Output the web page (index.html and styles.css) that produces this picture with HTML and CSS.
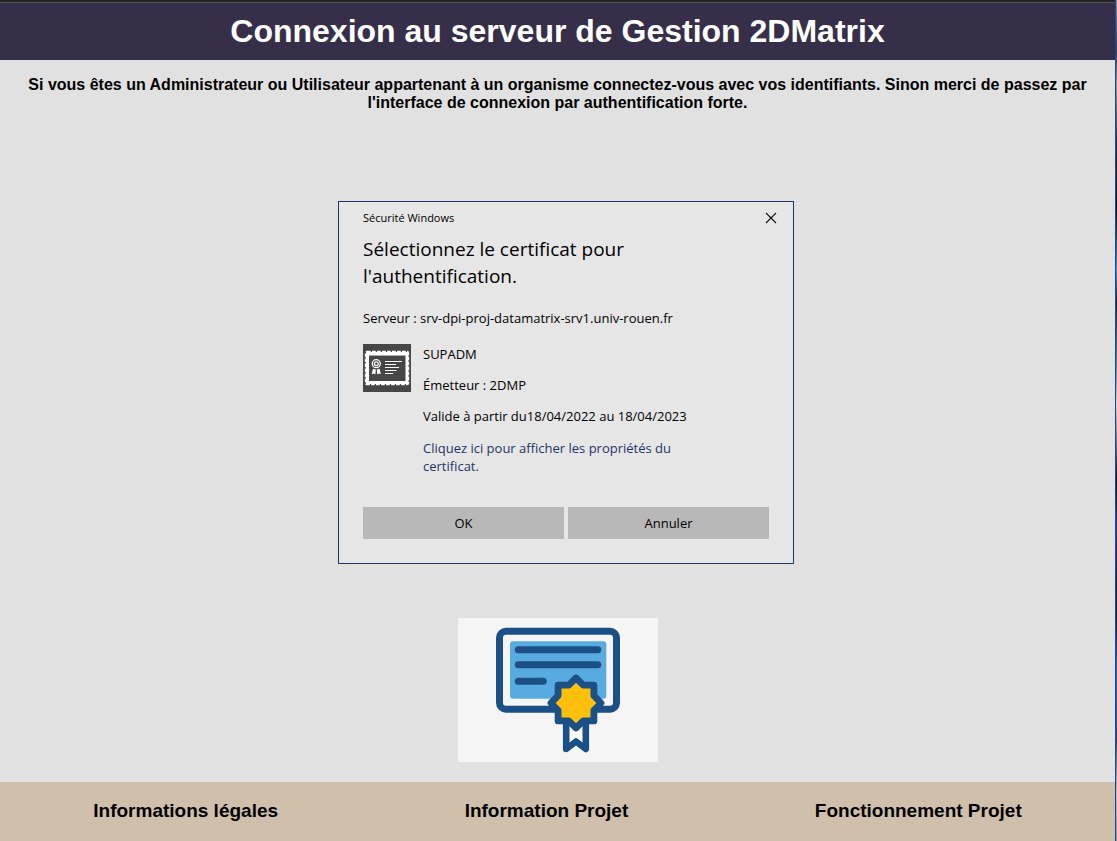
FILE: index.html
```html
<!DOCTYPE html>
<html lang="fr">
<head>
<meta charset="utf-8">
<title>Connexion au serveur de Gestion 2DMatrix</title>
<link rel="stylesheet" href="styles.css">
</head>
<body>
<div class="page">
  <header class="banner"><h1>Connexion au serveur de Gestion 2DMatrix</h1></header>
  <main class="content">
    <p class="intro">Si vous êtes un Administrateur ou Utilisateur appartenant à un organisme connectez-vous avec vos identifiants. Sinon merci de passez par l'interface de connexion par authentification forte.</p>
    <div class="dialog-area">
      <section class="dialog" role="dialog" aria-labelledby="dialog-title">
        <div class="titlebar">
          <span>Sécurité Windows</span>
          <button class="close" type="button" aria-label="Fermer">
            <svg width="12" height="12" viewBox="0 0 12 12"><path d="M1 1l10 10M11 1L1 11" stroke="#111" stroke-width="1.1" fill="none"/></svg>
          </button>
        </div>
        <h2 id="dialog-title">Sélectionnez le certificat pour l'authentification.</h2>
        <p class="server">Serveur : srv-dpi-proj-datamatrix-srv1.univ-rouen.fr</p>
        <div class="certificate">
          <svg class="cert-icon" width="48" height="48" viewBox="0 0 48 48">
            <rect width="48" height="48" fill="#464646"/>
            <rect x="3" y="8" width="42" height="32" fill="#fff"/>
            <rect x="3" y="8" width="42" height="32" rx="1" fill="none" stroke="#fff" stroke-width="2.4" stroke-dasharray="3.8 1.2"/>
            <rect x="6" y="12" width="36.500" height="25" fill="#464646"/>
            <path d="M6 11.500h36.500" stroke="#a5adab" stroke-width="1"/>
            <circle cx="13.300" cy="19.700" r="4" fill="none" stroke="#fff" stroke-width="1.300"/>
            <circle cx="13.300" cy="19.700" r="1.900" fill="none" stroke="#fff" stroke-width="1.300"/>
            <path d="M10 24.800l2.800.8-.4 5-1.700-1-2 .6zM16.600 24.800l-2.800.8.4 5 1.700-1 2 .6z" fill="#fff"/>
            <path d="M22 17.500h17M22 20.500h11M22 23.500h14M22 26.500h11.500M22 29.500h8" stroke="#fff" stroke-width="1"/>
          </svg>
          <div class="details">
            <p>SUPADM</p>
            <p>Émetteur : 2DMP</p>
            <p>Valide à partir du18/04/2022 au 18/04/2023</p>
            <a href="#">Cliquez ici pour afficher les propriétés du certificat.</a>
          </div>
        </div>
        <div class="actions">
          <button type="button">OK</button>
          <button type="button">Annuler</button>
        </div>
      </section>
    </div>
    <svg class="diploma" width="200" height="144" viewBox="0 0 200 144" role="img" aria-label="Certificat">
      <rect width="200" height="144" fill="#f5f5f5"/>
      <rect x="41.500" y="13.300" width="117" height="78" rx="6.500" fill="#f5f5f5" stroke="#1a5085" stroke-width="7"/>
      <rect x="52" y="23.300" width="96.300" height="57.400" rx="3" fill="#58abe0"/>
      <path d="M60.300 31.700h79.500M60.300 46.700h79.500M60.300 63.300h25" stroke="#1a5085" stroke-width="7" stroke-linecap="round"/>
      <path d="M108.200 104v27l9.800-7.500 9.800 7.500v-27z" fill="#fff" stroke="#1a5085" stroke-width="6.600" stroke-linejoin="round"/>
      <path d="M118 60l7.300 7.100h10.600v10.600L143 85l-7.100 7.300v10.600h-10.600L118 110l-7.300-7.100h-10.600V92.300L93 85l7.100-7.300V67.100h10.600z" fill="#ffc00d" stroke="#1a5085" stroke-width="6.800" stroke-linejoin="round"/>
    </svg>
  </main>
  <footer class="footer">
    <a href="#">Informations légales</a>
    <a href="#">Information Projet</a>
    <a href="#">Fonctionnement Projet</a>
  </footer>
</div>
<div class="edge"></div>
</body>
</html>
```
FILE: styles.css
```css
* { box-sizing: border-box; }
body {
  margin: 0;
  min-height: 100vh;
  display: flex;
  background: #e1e1e1;
  color: #000;
  font-family: "Liberation Sans", Arial, sans-serif;
}
h1, h2, p { margin: 0; }
a { color: inherit; text-decoration: none; }
button { border: 0; padding: 0; font: inherit; color: inherit; }
.page { flex: 1; display: flex; flex-direction: column; border-top: 2px solid #222; }
.edge {
  width: 2px;
  border-left: 1px solid #29457f;
  background: linear-gradient(#7d8ca8, #1d3a6c 6%, #8295b0 10%, #1c3260 17%, #07101f 25%, #3f8fc8 32%, #12264f 36%, #5a8ab0 44%, #d0d5dc 48%, #6464a0 53%, #0c1022 57%, #2a3c78 62%, #141b48 73%, #3464a8 80%, #2c4478 88%, #b5b5cc 94%, #8f93b5);
}
.banner {
  border-top: 1px solid #555;
  background: #372f49;
  padding: 10px;
  color: #fff;
  text-align: center;
}
.banner h1 { font-size: 32px; line-height: 37px; }
.content {
  flex: 1;
  display: flex;
  flex-direction: column;
  align-items: center;
  padding: 16px 20px 20px;
}
.intro { font-size: 16px; line-height: 18px; font-weight: bold; text-align: center; }
.dialog-area { padding-left: 17px; margin: 89px 0 54px; }
.dialog {
  width: 456px;
  max-width: 100%;
  padding: 8px 24px 24px;
  border: 1px solid #1d3567;
  background: #e6e6e6;
  font-family: "Open Sans", "Noto Sans", sans-serif;
  font-size: 13px;
  line-height: 18px;
}
.titlebar { display: flex; justify-content: space-between; align-items: center; font-size: 11px; line-height: 16px; }
.close { display: flex; padding: 2px; margin-right: -10px; background: none; }
.dialog h2 { max-width: 300px; margin-top: 10px; font-size: 19px; line-height: 27px; font-weight: normal; }
.server { margin-top: 19px; }
.certificate { display: flex; gap: 12px; margin-top: 17px; }
.cert-icon { flex: none; }
.details { display: flex; flex-direction: column; gap: 13px; max-width: 280px; padding-top: 1px; }
.details a { margin-top: 1px; color: #1f3468; }
.actions { display: grid; grid-template-columns: 1fr 1fr; gap: 4px; margin-top: 32px; }
.actions button { height: 32px; background: #b8b8b8; }
.diploma { display: block; flex: none; }
.footer {
  display: flex;
  justify-content: space-around;
  padding: 18px 0 19px;
  background: #d0bfab;
  font-size: 19px;
  line-height: 22px;
  font-weight: bold;
}
```
